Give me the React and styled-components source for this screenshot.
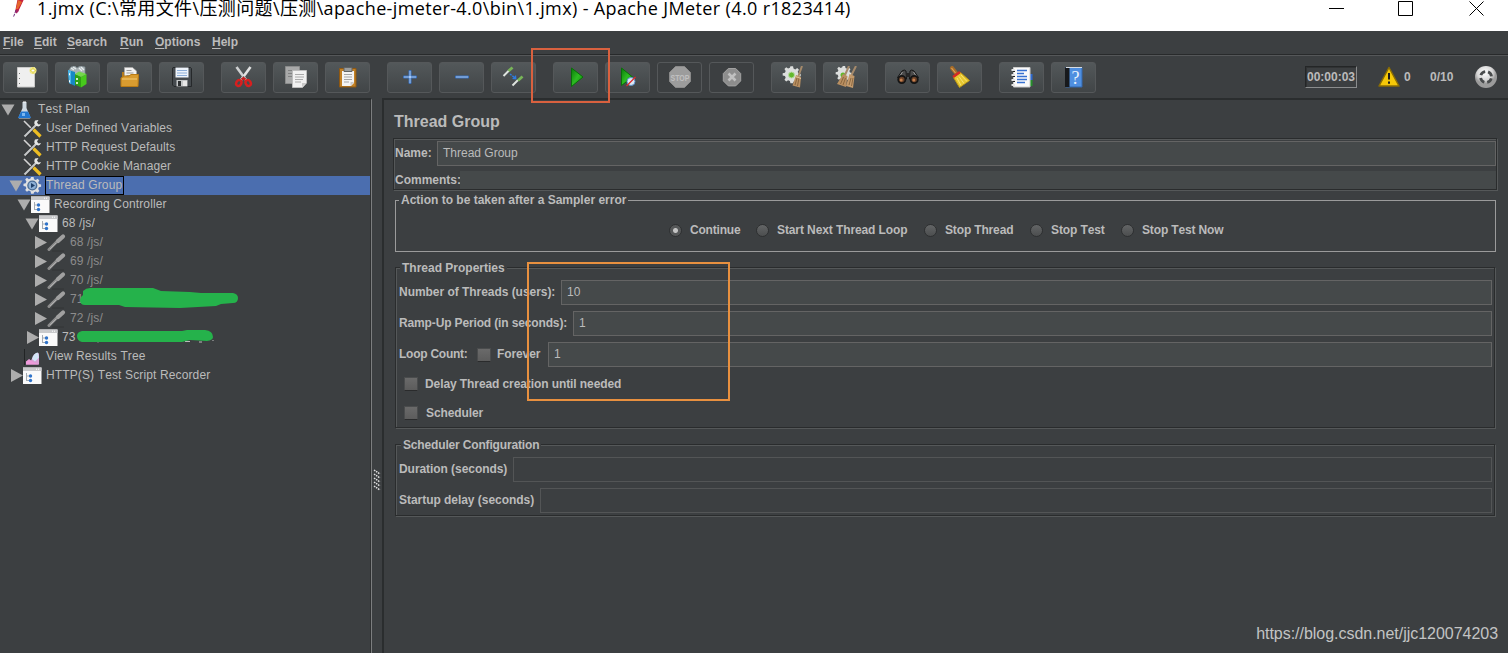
import styled, { createGlobalStyle } from "styled-components";

const GlobalStyle = createGlobalStyle`
  * {
    box-sizing: border-box;
  }
  body {
    margin: 0;
    overflow: hidden;
    background: #3c3f41;
    color: #bbbbbb;
    font-family: "Liberation Sans", "Noto Sans CJK SC", sans-serif;
    font-size: 12px;
    line-height: 14px;
    font-kerning: none;
  }
  svg {
    display: block;
    flex: none;
  }
`

const Window = styled.div`
  position: relative;
  width: 1508px;
  height: 653px;
  display: flex;
  flex-direction: column;
  overflow: hidden;
`

/* Title bar */

const TitleBar = styled.header`
  height: 31px;
  flex: none;
  display: flex;
  align-items: flex-start;
  padding: 0 23px 0 12px;
  background: #fff;
  color: #000;
`
const Caption = styled.div`
  flex: 1;
  margin-left: 7px;
  font-family: "Open Sans", "Noto Sans CJK SC", sans-serif;
  font-size: 18px;
  line-height: 16px;
  letter-spacing: 0.37px;
  white-space: pre;
`
const WindowButtons = styled.div`
  display: flex;
  gap: 54px;
`

/* Menu */

const MenuBar = styled.nav`
  height: 25px;
  flex: none;
  display: flex;
  padding: 4px 0 0 3px;
  font-weight: 700;
  border-bottom: 1px solid #555759;
  box-shadow: inset 0 -1px 0 #282a2b;
`
const MenuItem = styled.span`
  width: ${props => props.width}px;

  &::first-letter {
    text-decoration: underline;
    text-underline-offset: 2px;
  }
`

/* Toolbar */

const Toolbar = styled.div`
  height: 42px;
  flex: none;
  display: flex;
  align-items: flex-start;
  padding: 6px 10px 0 3px;
`
const ButtonGroup = styled.div`
  display: flex;
  gap: 7px;
  margin-right: 17px;
`
const ToolButton = styled.button`
  width: 45px;
  height: 31px;
  display: flex;
  align-items: flex-start;
  padding: 3px 0 0 10px;
  border: 1px solid #55585a;
  border-radius: 3px;
  background: ${props => props.disabled ? 'transparent' : 'linear-gradient(#53585a, #414547)'};
`
const Status = styled.div`
  display: flex;
  margin: 4px 0 0 auto;
  font-weight: 700;
`
const Timer = styled.div`
  width: 52px;
  height: 22px;
  margin-right: 20px;
  padding: 3px 0 0 1px;
  border: 1px solid;
  border-color: #242627 #8a8c8d #8a8c8d #242627;
  box-shadow: inset 1px 1px 0 #303233;
`
const Counter = styled.span`
  margin: 4px 0 0 ${props => props.gap}px;
  width: ${props => props.width}px;
`

/* Split pane */

const Body = styled.main`
  flex: 1;
  display: flex;
  min-height: 0;
`
const TreePane = styled.aside`
  position: relative;
  width: 372px;
  flex: none;
  border-top: 2px solid #2a2d2e;
  border-right: 1px solid #7c7e7f;
  box-shadow: inset -1px 0 0 #2f3132;
  padding-right: 1px;
`
const Divider = styled.div`
  width: 10px;
  flex: none;
  display: flex;
  align-items: flex-start;
  padding: 371px 0 0 1px;
`
const Content = styled.section`
  flex: 1;
  min-width: 0;
  padding: 0 10px 0 9px;
  border-top: 2px solid #2a2d2e;
  border-left: 2px solid #2a2d2e;
`

/* Tree */

const Row = styled.div`
  height: 19px;
  display: flex;
  align-items: center;
  padding-left: ${props => 1 + props.level * 8}px;
  background: ${props => props.selected ? '#4b6eaf' : 'transparent'};
`
const Arrow = styled.span`
  width: 14px;
  height: 19px;
  flex: none;
`
const NodeIcon = styled.span`
  width: 18px;
  height: 19px;
  margin-right: 4px;
`
const NodeText = styled.span`
  height: 19px;
  padding: 1px 1px 0 0;
  border: 1px solid ${props => props.selected ? '#000' : 'transparent'};
  letter-spacing: 0.13px;
  color: ${props => props.disabled ? '#8c8c8c' : '#bbbbbb'};
  white-space: nowrap;
`
const Scribbles = styled.svg`
  position: absolute;
  left: 0;
  top: 185px;
`

/* Form */

const Heading = styled.h1`
  margin: 12px 0 6px 1px;
  font-size: 16px;
  line-height: 20px;
  font-weight: 700;
`
const Etched = styled.div`
  border: 1px solid #2a2c2d;
  box-shadow: inset 1px 1px 0 #555859, 1px 1px 0 #555859;
`
const NameBox = styled(Etched)`
  height: 52px;
  margin-right: 1px;
  padding: 2px 0 0 1px;
`
const Group = styled(Etched)`
  height: ${props => props.height}px;
  margin: ${props => props.top}px 3px 0 2px;
  padding: 0 2px 0 3px;
`
const ErrorGroup = styled.div`
  height: 52px;
  margin: 10px 2px 0;
  padding-left: 1px;
  border: 1px solid #9b9b9b;
`
const Legend = styled.div`
  position: relative;
  width: fit-content;
  height: 14px;
  margin: ${props => props.top || -8}px 0 0 ${props => props.indent}px;
  padding: 0 2px 0 2px;
  background: #3c3f41;
  font-weight: 700;
  letter-spacing: ${props => props.spacing || '0'}px;
`
const FormRow = styled.div`
  display: flex;
  align-items: center;
  height: ${props => props.height || 25}px;
  margin-top: ${props => props.top || 0}px;
`
const Label = styled.label`
  width: ${props => props.width ? props.width + 'px' : 'auto'};
  flex: none;
  margin-top: ${props => props.low ? 0 : -1}px;
  font-weight: 700;
  letter-spacing: ${props => props.spacing || '0'}px;
  white-space: nowrap;
`
const Field = styled.div`
  flex: 1;
  height: ${props => props.plain ? 18 : 25}px;
  padding: 4px 5px;
  border: ${props => props.plain ? 'none' : `1px solid ${props.disabled ? '#535556' : '#646464'}`};
  background: ${props => props.disabled ? 'transparent' : '#45494a'};
`
const Radios = styled.div`
  display: flex;
  align-items: center;
  height: 16px;
  margin: 15px 0 0 272px;
`
const Radio = styled.span`
  width: 13px;
  height: 13px;
  margin: 1px 8px 0 0;
  border-radius: 50%;
  border: 1px solid #2e3031;
  background: ${props => props.checked
    ? 'radial-gradient(circle, #c4c4c4 0 2px, #555758 3px)'
    : 'linear-gradient(#636566, #4c4e4f)'};
`
const Check = styled.span`
  width: 14px;
  height: 14px;
  flex: none;
  margin-left: ${props => props.left}px;
  margin-right: ${props => props.right}px;
  border: 1px solid #4a4c4d;
  border-bottom-color: #2a2b2c;
  background: linear-gradient(#6a6a6a, #5c5c5c);
`

/* Overlays */

const Marker = styled.div`
  position: absolute;
  left: ${props => props.x}px;
  top: ${props => props.y}px;
  width: ${props => props.width}px;
  height: ${props => props.height}px;
  border: 2px solid ${props => props.color};
`
const Watermark = styled.div`
  position: absolute;
  right: 10px;
  bottom: 10px;
  font-size: 16px;
  line-height: 18px;
  color: #c3c4c4;
  letter-spacing: -0.03px;
`

const gearPath = "M9 0h3l.5 2.6 2 .9 2.2-1.5 2 2-1.4 2.2.8 2 2.6.6v2.6l-2.6.6-.8 2 1.4 2.2-2 2-2.2-1.4-2 .8L12 19.4H9l-.6-2.8-2-.8-2.2 1.4-2-2 1.4-2.2-.8-2L.2 10.4V7.8l2.6-.6.8-2L2.200 3l2-2 2.200 1.500 2-.900z"

const icons = {
  new: (
    <>
      <path d="M3.500 1.500h17v19.500h-17z" fill="#efefef" stroke="#c9c9c9" />
      <path d="M5.500 7v1M5.500 12v1M5.500 17v1" stroke="#777" />
      <circle cx="19" cy="4.500" r="3.500" fill="#f1e98a" />
      <path d="M19 1.500l.8 2.200 2.200.8-2.200.8-.8 2.200-.8-2.200-2.200-.8 2.200-.8z" fill="#fff" stroke="#d9c826" strokeWidth=".6" />
    </>
  ),
  templates: (
    <>
      <path d="M3 4l2-3 4-1 2 2 3-2 5 1v8H4z" fill="#a9b2b5" stroke="#7d8b90" strokeWidth=".7" />
      <path d="M5 2l3 2M7 1l3 2M13 2l3 3M15 1l3 3" stroke="#e6ecee" strokeWidth="1.200" />
      <path d="M2 4l7 2v14l-6-3z" fill="#1689c4" />
      <path d="M2 4l3 1v13l-2-1z" fill="#4db5e5" />
      <path d="M3 7l1 .4v2L3 9zM3 14l1 .4v2L3 16z" fill="#fff" />
      <path d="M9 8l6 3v10.500l-6-3z" fill="#2fa313" />
      <path d="M15 11l5.500-3v10L15 21.500z" fill="#47c91c" />
      <path d="M9 8l4-2.500 7.500 2.500L15 11z" fill="#74d94b" />
      <path d="M11 12v2M11 16v2" stroke="#fff" strokeWidth="1.500" />
    </>
  ),
  open: (
    <>
      <path d="M4 6h4l1 2h10v5H4z" fill="#b57b1e" />
      <path d="M6.500 1.500h8l4 3.500v10h-12z" fill="#f2f2f2" stroke="#aaa" strokeWidth=".7" />
      <path d="M8.500 4.500h5M8.500 7h7M8.500 9.500h7" stroke="#999" />
      <path d="M3 12l3-2h5l2-1.500h7.500L20 20.500H3z" fill="#d99c30" stroke="#b97b15" />
      <path d="M4 13h15" stroke="#f3cc79" />
    </>
  ),
  save: (
    <>
      <path d="M3 1.500h17.500l1 1v18H4L2.500 19V2z" fill="#454a4e" stroke="#26292b" />
      <path d="M5.500 1.500h13v10h-13z" fill="#edf3fb" />
      <path d="M7 4.500h10M7 7h10M7 9.500h10" stroke="#8badd8" />
      <path d="M6.500 14h11v6.500h-11z" fill="#c4c7c8" />
      <path d="M8 15h3v5H8z" fill="#2c2f31" />
      <path d="M13 15h4v5h-4z" fill="#e8e8e8" />
    </>
  ),
  cut: (
    <>
      <path d="M4.500 1L14 14" stroke="#cfd1d2" strokeWidth="2.600" />
      <path d="M18.500 1L9 14" stroke="#e2e3e3" strokeWidth="2.600" />
      <circle cx="11.500" cy="11" r="1" fill="#777" />
      <path d="M9.500 13.500l2-1.500 2 1.500" fill="none" stroke="#c81e1e" strokeWidth="2.200" />
      <ellipse cx="6.800" cy="17" rx="2.500" ry="3.100" fill="none" stroke="#d81f1f" strokeWidth="2.400" transform="rotate(28 6.800 17)" />
      <ellipse cx="16.200" cy="17" rx="2.500" ry="3.100" fill="none" stroke="#d81f1f" strokeWidth="2.400" transform="rotate(-28 16.200 17)" />
    </>
  ),
  copy: (
    <>
      <path d="M1.500.5h14v17h-14z" fill="#a8a9a9" stroke="#8b8c8c" />
      <path d="M4 4.500h8M4 7.500h4M4 10.500h4" stroke="#818282" />
      <path d="M8.500 4.500h14V17l-4 4.500h-10z" fill="#f1f1f1" stroke="#bdbdbd" />
      <path d="M11 8.500h9M11 11h9M11 13.500h8M11 16h6" stroke="#aaa" />
      <path d="M18 21v-4h4z" fill="#c8c8c8" />
    </>
  ),
  paste: (
    <>
      <path d="M3.500 2.500h16.500v18.500h-16.500z" fill="#c28126" stroke="#8f5812" />
      <path d="M6 5h12v12l-3 3H6z" fill="#f4f4f4" />
      <path d="M8 1.500h8v4H8z" fill="#9a9d9e" stroke="#606364" />
      <path d="M8 8.500h8M8 11h8M8 13.500h8M8 16h5" stroke="#a5a5a5" />
      <path d="M14.500 20v-4H18z" fill="#c9c9c9" />
    </>
  ),
  plus: <path d="M11 4.500h2v5.500h5.500v2H13v5.500h-2V12H5.500v-2H11z" fill="#a9c9f2" stroke="#3b70bb" />,
  minus: <path d="M5.500 10h13v2h-13z" fill="#a9c9f2" stroke="#3b70bb" />,
  toggle: (
    <>
      <path d="M1.500 10L7 4.500" stroke="#dfe4e0" strokeWidth="2" />
      <path d="M6.500 5L10.500 1.500" stroke="#78b558" strokeWidth="2.800" />
      <path d="M10.500 19.500L16 14" stroke="#dfe4e0" strokeWidth="2" />
      <path d="M16 14.500L20.500 10.500" stroke="#78b558" strokeWidth="2.800" />
      <path d="M8 8l4.500 3.500" stroke="#2e7ae0" strokeWidth="1.500" strokeDasharray="2 1" />
      <path d="M14.500 13.500l-4.500-.5 4-4z" fill="#2e7ae0" />
    </>
  ),
  start: <path d="M7.500 2v18.500L19 11z" fill="url(#green)" stroke="#087008" />,
  startNoPause: (
    <>
      <path d="M5.500 2v17.500L16.500 11z" fill="url(#green)" stroke="#087008" />
      <circle cx="15" cy="15.500" r="4" fill="#dce9f6" stroke="#5a8fc8" />
      <path d="M10.500 20L19.500 11" stroke="#e02a2a" strokeWidth="1.300" />
    </>
  ),
  stop: (
    <>
      <path d="M7.500.5h9l6 6v9l-6 6h-9l-6-6v-9z" fill="#9c9c9c" stroke="#8a8a8a" />
      <text x="12" y="14.500" textAnchor="middle" fontSize="9.500" fontWeight="700" textLength="19" lengthAdjust="spacingAndGlyphs" fill="#c0c0c0">STOP</text>
    </>
  ),
  shutdown: (
    <>
      <path d="M8.300 2.500h7.400l5 5v7.400l-5 5H8.300l-5-5V7.500z" fill="#8d8d8d" stroke="#a2a2a2" />
      <path d="M8.500 7.500l7 7M15.500 7.500l-7 7" stroke="#c0c0c0" strokeWidth="2.600" />
    </>
  ),
  clear: (
    <>
      <path d={gearPath} fill="#dcdedd" transform="translate(.5 .3) scale(.88)" />
      <circle cx="9.500" cy="9" r="3" fill="#63b82c" stroke="#b7dba0" />
      <path d="M20 0L16.500 10" stroke="#a58a6b" strokeWidth="2" />
      <path d="M14 9l5 2-1 10.500-7.500-2z" fill="#b98f61" />
      <path d="M15 12l-2 7M17 12l-1.500 8" stroke="#7e5c36" strokeWidth=".8" />
      <path d="M13.500 10.500l5.500 2" stroke="#e0c29c" />
    </>
  ),
  clearAll: (
    <>
      <path d={gearPath} fill="#dcdedd" transform="translate(1.500 0) scale(.8)" />
      <circle cx="9" cy="9" r="2.500" fill="#63b82c" />
      <path d="M15 0L11 9M22 0l-4.500 9" stroke="#a58a6b" strokeWidth="2" />
      <path d="M9 8l4.500 2L12 21l-9-3z" fill="#b98f61" />
      <path d="M15.500 8l5 2-1.500 12-7-2z" fill="#c39a6c" />
      <path d="M9.500 11l-3 7M11.500 12L9 19M17 12l-2 7M19 12l-1.500 8" stroke="#7e5c36" strokeWidth=".8" />
    </>
  ),
  search: (
    <>
      <path d="M6 5Q8.500 3 10 5l.5 8H3L1.500 11.500zM18 5Q15.500 3 14 5l-.5 8h7.500l1.500-1.500z" fill="#4b4b4b" stroke="#161616" />
      <path d="M10 7h4v4h-4z" fill="#262626" />
      <path d="M6.500 6L3.500 10.500M17.500 6l3 4.500" stroke="#9a9a9a" />
      <circle cx="5.800" cy="13.500" r="3.600" fill="#6b4228" stroke="#151515" strokeWidth="1.800" />
      <circle cx="18.200" cy="13.500" r="3.600" fill="#6b4228" stroke="#151515" strokeWidth="1.800" />
      <circle cx="5.200" cy="14" r="1.500" fill="#c5804f" />
      <circle cx="17.800" cy="14" r="1.500" fill="#c5804f" />
    </>
  ),
  reset: (
    <>
      <path d="M4 2l4 5" stroke="#a76c28" strokeWidth="4" strokeLinecap="round" />
      <path d="M3.500 2l4 5" stroke="#dda55c" strokeWidth="1.200" />
      <path d="M5.500 11.500l7-5 9 8-10 7z" fill="#e6c72f" stroke="#bb9613" />
      <path d="M9 12l4 7.500M11 10.500l5 7M13 9l6 6.500" stroke="#f7e57a" strokeWidth=".9" />
      <path d="M5 11l7-5" stroke="#d42a23" strokeWidth="2.600" />
    </>
  ),
  functions: (
    <>
      <path d="M18 8h4.500v6H18z" fill="#2e6ad0" />
      <path d="M18 14h4.500v6H18z" fill="#25902b" />
      <path d="M3.500 1.500h16.500v19.500H3.500z" fill="#fafafa" stroke="#ccc" />
      <path d="M7 4.500h10M7 7.500h7M7 10.500h10M7 13.500h10M7 16.500h8" stroke="#3771d1" strokeWidth="1.300" />
      <path d="M1.500 4h3.500M1.500 9h3.500M1.500 14h3.500M1.500 19h3.500" stroke="#e4e4e4" strokeWidth="2" />
      <path d="M3 5.500h2M3 10.500h2M3 15.500h2" stroke="#222" />
    </>
  ),
  help: (
    <>
      <path d="M3.500 1.500h16.500v19.500H3.500z" fill="#4f8fe0" stroke="#3267ad" />
      <path d="M3 1.500h4.500V21H3z" fill="#17191c" />
      <path d="M4 1.500h16" stroke="#d7dde4" />
      <text x="13.500" y="17.500" textAnchor="middle" fontFamily="Liberation Serif" fontSize="18" fill="#e9f2fd">?</text>
    </>
  ),
}

const nodeIcons = {
  plan: (
    <>
      <path d="M7.500 2h4v6l4 9.500q0 1-1 1h-10q-1 0-1-1l4-9.500z" fill="#cfd9e2" />
      <path d="M6 11.500h7l3 6.500H3z" fill="#2276cf" />
      <path d="M7 13h3v3H7z" fill="#7bb6f0" />
      <path d="M8 2h3" stroke="#fff" />
    </>
  ),
  config: (
    <>
      <path d="M1 2l10 10" stroke="#d4d4d4" strokeWidth="1.600" />
      <path d="M2 17.500L13 6" stroke="#303334" strokeWidth="3.600" />
      <path d="M1.500 17.500L13 6" stroke="#c4c7c8" strokeWidth="2.200" />
      <path d="M12 1.500q-2 4 1.500 5.500t4.500-2l-2.500.5-1.500-2 1.500-2.500z" fill="#e4e6e6" />
      <path d="M10.500 10.500l7 7" stroke="#edbd22" strokeWidth="3.200" />
    </>
  ),
  threads: (
    <>
      <path d={gearPath} fill="#dfe0e2" transform="translate(.3 1) scale(.86)" />
      <circle cx="9.300" cy="9.500" r="4.400" fill="#8eb0d6" stroke="#4a6d97" strokeWidth="1.400" />
      <path d="M8 7v5l4-2.500z" fill="#20406a" />
    </>
  ),
  controller: (
    <>
      <path d="M0 1.500h18.500V18H0z" fill="#fafafa" />
      <path d="M0 1.500h18.500V5H0z" fill="#c9cacc" />
      <path d="M13 3.200h1M15 3.200h1" stroke="#fff" />
      <path d="M3.500 7v8M3.500 10h3M3.500 14.500h3" stroke="#a5abb1" fill="none" />
      <circle cx="7.500" cy="10" r="1.700" fill="#2f73c9" />
      <circle cx="7.500" cy="14.500" r="1.700" fill="#2f73c9" />
    </>
  ),
  sampler: (
    <>
      <path d="M2 16.500L11 7.500" stroke="#8d8d8d" strokeWidth="3" strokeLinecap="round" />
      <path d="M11 8L16 3.500" stroke="#a0a0a0" strokeWidth="4.200" strokeLinecap="round" />
      <path d="M3 16L9 10" stroke="#b0b0b0" strokeWidth="1" />
      <path d="M5 18h12" stroke="#303233" strokeWidth=".8" />
    </>
  ),
  results: (
    <>
      <path d="M1.500 2v16" stroke="#222425" />
      <path d="M3 17.500V15l3-3 2 1.500 3-6q3-2.500 5-1v11z" fill="#d9a1d5" />
      <path d="M9 12q1.500-6 6-6.500l1 5-4 4z" fill="#d3e6f7" />
      <path d="M3 14.500l3-2 4 2.500 6 2.500H3z" fill="#ef9adb" />
    </>
  ),
}

const toolbar = [
  ['new', 'templates', 'open', 'save'],
  ['cut', 'copy', 'paste'],
  ['plus', 'minus', 'toggle'],
  ['start', 'startNoPause', 'stop', 'shutdown'],
  ['clear', 'clearAll'],
  ['search', 'reset'],
  ['functions', 'help'],
]

const menus = [
  { text: 'File', width: 31 },
  { text: 'Edit', width: 33 },
  { text: 'Search', width: 53 },
  { text: 'Run', width: 35 },
  { text: 'Options', width: 57 },
  { text: 'Help', width: 40 },
]

const nodes = [
  { text: 'Test Plan', icon: 'plan', level: 0, open: true },
  { text: 'User Defined Variables', icon: 'config', level: 1 },
  { text: 'HTTP Request Defaults', icon: 'config', level: 1 },
  { text: 'HTTP Cookie Manager', icon: 'config', level: 1 },
  { text: 'Thread Group', icon: 'threads', level: 1, open: true, selected: true },
  { text: 'Recording Controller', icon: 'controller', level: 2, open: true },
  { text: '68 /js/', icon: 'controller', level: 3, open: true },
  { text: '68 /js/', icon: 'sampler', level: 4, open: false, disabled: true },
  { text: '69 /js/', icon: 'sampler', level: 4, open: false, disabled: true },
  { text: '70 /js/', icon: 'sampler', level: 4, open: false, disabled: true },
  { text: '71', icon: 'sampler', level: 4, open: false, disabled: true },
  { text: '72 /js/', icon: 'sampler', level: 4, open: false, disabled: true },
  { text: '73', icon: 'controller', level: 3, open: false },
  { text: 'View Results Tree', icon: 'results', level: 1 },
  { text: 'HTTP(S) Test Script Recorder', icon: 'controller', level: 1, open: false },
]

const errorActions = [
  { text: 'Continue', width: 66, spacing: -0.2, checked: true },
  { text: 'Start Next Thread Loop', width: 147, spacing: -0.1 },
  { text: 'Stop Thread', width: 85, spacing: -0.15 },
  { text: 'Stop Test', width: 70, spacing: -0.1 },
  { text: 'Stop Test Now', width: 90, spacing: -0.15 },
]

const TreeNode = ({ text, icon, level, open, selected, disabled }) => (
  <Row level={level} selected={selected}>
    <Arrow>
      {open !== undefined && (
        <svg width="14" height="19">
          <path d={open ? "M.5 4.500h13L7 15.500z" : "M2 3v13l12-6.500z"} fill="#adadad" />
        </svg>
      )}
    </Arrow>
    <NodeIcon>
      <svg width="19" height="19">{nodeIcons[icon]}</svg>
    </NodeIcon>
    <NodeText selected={selected} disabled={disabled}>{text}</NodeText>
  </Row>
)

const App = () => (
  <Window>
    <GlobalStyle />
    <TitleBar>
      <svg width="18" height="20">
        <path d="M6 -3L13 -3L6 12L3 12z" fill="#c8203c" />
        <path d="M6 0L10 2L6 9L4 9z" fill="#e5682c" />
        <path d="M4 10L1.500 17" stroke="#6d2c7c" strokeDasharray="3 1" />
        <path d="M6 10L4 13" stroke="#a32567" strokeWidth="2" />
      </svg>
      <Caption>1.jmx (C:\常用文件\压测问题\压测\apache-jmeter-4.0\bin\1.jmx) - Apache JMeter (4.0 r1823414)</Caption>
      <WindowButtons>
        <svg width="15" height="18"><path d="M0 8.500h15" stroke="#000" /></svg>
        <svg width="17" height="18"><path d="M.5 1.500h14v14H.5z" fill="none" stroke="#000" /></svg>
        <svg width="16" height="18"><path d="M.5 1.500l14 14M14.500 1.500l-14 14" stroke="#000" /></svg>
      </WindowButtons>
    </TitleBar>

    <MenuBar>
      {menus.map(menu => <MenuItem key={menu.text} width={menu.width}>{menu.text}</MenuItem>)}
    </MenuBar>

    <Toolbar>
      <svg width="0" height="0">
        <linearGradient id="green" x2="1" y2="1">
          <stop offset="0" stopColor="#0a7a0a" />
          <stop offset=".5" stopColor="#2dbb22" />
          <stop offset="1" stopColor="#0d8a0d" />
        </linearGradient>
      </svg>
      {toolbar.map(group => (
        <ButtonGroup key={group[0]}>
          {group.map(name => (
            <ToolButton key={name} disabled={name === 'stop' || name === 'shutdown'}>
              <svg width="24" height="23">{icons[name]}</svg>
            </ToolButton>
          ))}
        </ButtonGroup>
      ))}
      <Status>
        <Timer>00:00:03</Timer>
        <svg width="24" height="23">
          <path d="M12 1.500L22 20H2z" fill="#f5c808" stroke="#8a6d04" strokeWidth="1.500" strokeLinejoin="round" />
          <path d="M12 7v6.500M12 15.500v2.200" stroke="#1d1d1d" strokeWidth="2" />
        </svg>
        <Counter gap={3} width={26}>0</Counter>
        <Counter gap={0} width={44}>0/10</Counter>
        <svg width="24" height="23">
          <defs>
            <radialGradient id="ball" cx=".45" cy=".3">
              <stop offset="0" stopColor="#fff" />
              <stop offset=".7" stopColor="#d6d6d6" />
              <stop offset="1" stopColor="#9b9b9b" />
            </radialGradient>
          </defs>
          <circle cx="12" cy="11" r="11" fill="url(#ball)" />
          <circle cx="12" cy="11" r="5.500" fill="none" stroke="#484b4c" strokeWidth="2.800" strokeDasharray="5.640 3" strokeDashoffset="-1.500" />
        </svg>
      </Status>
    </Toolbar>

    <Body>
      <TreePane>
        {nodes.map((node, i) => <TreeNode key={i} {...node} />)}
        <Scribbles width="260" height="64" viewBox="0 285 260 64" fill="#25b24b">
          <path d="M98 341.500v1M185 341.500h5M199 342h3M212.500 340.500h1" stroke="#bbbbbb" />
          <path d="M83 291Q86 288 90 288H153L161 291L190 292L201 293H233Q238 294 238 298Q238 303 233 303L221 304L216 306L180 308L125 307L119 305H85Q80 305 80 300Q80 297 83 295Z" />
          <path d="M82 331H182L187 330H205Q213 331 213 337Q213 340 207 341L190 340L182 342H82Q77 341 77 336Q77 332 82 331Z" />
        </Scribbles>
      </TreePane>
      <Divider>
        <svg width="8" height="24">
          <path d="M1 1l6 4M1 5l6 4M1 9l6 4M1 13l6 4M1 17l6 4" stroke="#e2e2e2" strokeWidth="1.500" strokeDasharray="1.600 .8" />
        </svg>
      </Divider>
      <Content>
        <Heading>Thread Group</Heading>
        <NameBox>
          <FormRow>
            <Label width={42}>Name:</Label>
            <Field>Thread Group</Field>
          </FormRow>
          <FormRow height={18} top={5}>
            <Label low width={65}>Comments:</Label>
            <Field plain />
          </FormRow>
        </NameBox>

        <ErrorGroup>
          <Legend indent={2}>Action to be taken after a Sampler error</Legend>
          <Radios>
            {errorActions.map(action => (
              <FormRow key={action.text} height={16}>
                <Radio checked={action.checked} />
                <Label low width={action.width} spacing={action.spacing}>{action.text}</Label>
              </FormRow>
            ))}
          </Radios>
        </ErrorGroup>

        <Group height={161} top={15}>
          <Legend indent={1} top={-7}>Thread Properties</Legend>
          <FormRow top={5}>
            <Label width={162} spacing={-0.04}>Number of Threads (users):</Label>
            <Field>10</Field>
          </FormRow>
          <FormRow top={6}>
            <Label width={174} spacing={-0.14}>Ramp-Up Period (in seconds):</Label>
            <Field>1</Field>
          </FormRow>
          <FormRow top={6}>
            <Label width={69} spacing={-0.25}>Loop Count:</Label>
            <Check left={9} right={6} />
            <Label width={51} spacing={-0.1}>Forever</Label>
            <Field>1</Field>
          </FormRow>
          <FormRow top={9} height={16}>
            <Check left={5} right={7} />
            <Label low spacing={-0.09}>Delay Thread creation until needed</Label>
          </FormRow>
          <FormRow top={13} height={16}>
            <Check left={5} right={8} />
            <Label low spacing={-0.1}>Scheduler</Label>
          </FormRow>
        </Group>

        <Group height={72} top={16}>
          <Legend indent={2} top={-7} spacing={-0.16}>Scheduler Configuration</Legend>
          <FormRow top={5}>
            <Label width={114} spacing={-0.06}>Duration (seconds)</Label>
            <Field disabled />
          </FormRow>
          <FormRow top={6}>
            <Label width={141} spacing={-0.04}>Startup delay (seconds)</Label>
            <Field disabled />
          </FormRow>
        </Group>
      </Content>
    </Body>

    <Marker x={531} y={48} width={79} height={55} color="#d9613f" />
    <Marker x={527} y={262} width={203} height={139} color="#e8903f" />
    <Watermark>https://blog.csdn.net/jjc120074203</Watermark>
  </Window>
)

export default App
